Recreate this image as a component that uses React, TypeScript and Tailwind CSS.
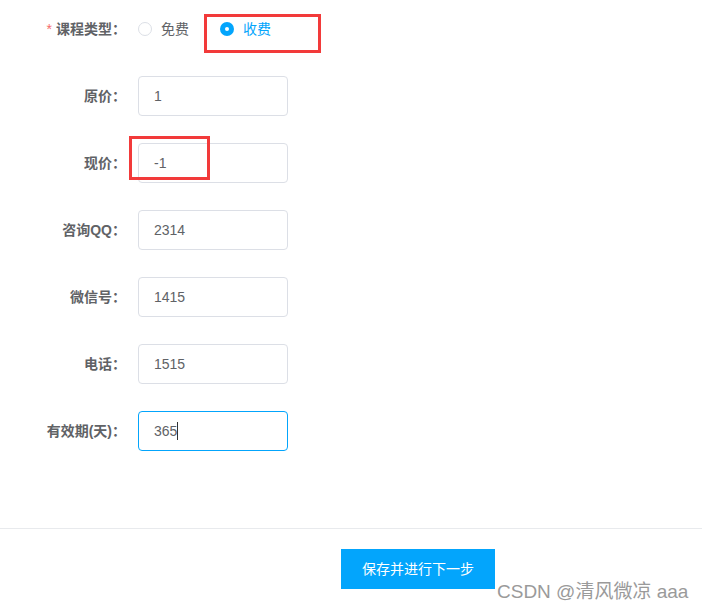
import React from "react"

const fields = [
    { label: "原价", value: "1" },
    { label: "现价", value: "-1" },
    { label: "咨询QQ", value: "2314" },
    { label: "微信号", value: "1415" },
    { label: "电话", value: "1515" },
]

function Radio({ checked, label }: { checked?: boolean; label: string }) {
    return (
        <label className="flex items-center gap-[9px] cursor-pointer">
            {checked ? (
                <span className="w-[14px] h-[14px] rounded-full bg-[#03a5fc] flex items-center justify-center">
                    <span className="w-[4px] h-[4px] rounded-full bg-white" />
                </span>
            ) : (
                <span className="w-[14px] h-[14px] rounded-full border border-[#dcdfe6] bg-white" />
            )}
            <span className={checked ? "text-[#03a5fc]" : "text-[#606266]"}>{label}</span>
        </label>
    )
}

function Row({ label, required, children }: { label: string; required?: boolean; children: React.ReactNode }) {
    return (
        <div className="flex items-center h-10">
            <div className="w-[138px] pr-3 text-right font-bold text-[#606266] text-sm">
                {required && <span className="text-[#f56c6c] mr-1 font-normal">*</span>}
                {label}：
            </div>
            {children}
        </div>
    )
}

export default function App() {
    return (
        <div
            className="relative w-[702px] h-[609px] bg-white overflow-hidden text-sm"
            style={{ fontFamily: '"Liberation Sans", "Noto Sans CJK SC", sans-serif' }}
        >
            <div className="flex flex-col gap-[27px] pt-[9px]">
                <Row label="课程类型" required>
                    <div className="flex items-center gap-[31px]">
                        <Radio label="免费" />
                        <Radio label="收费" checked />
                    </div>
                </Row>
                {fields.map((f) => (
                    <Row key={f.label} label={f.label}>
                        <div className="w-[150px] h-10 border border-[#dcdfe6] rounded px-[15px] flex items-center text-[#606266]">
                            {f.value}
                        </div>
                    </Row>
                ))}
                <Row label="有效期(天)">
                    <div className="w-[150px] h-10 border border-[#03a5fc] rounded px-[15px] flex items-center text-[#606266]">
                        365
                        <span className="w-px h-[18px] bg-[#333]" />
                    </div>
                </Row>
            </div>

            <div className="mt-[77px] border-t border-[#e8eaed]" />
            <div className="pt-5 pl-[341px]">
                <button className="w-[154px] h-10 bg-[#03a5fc] text-white text-sm">保存并进行下一步</button>
            </div>

            {/* annotations */}
            <div className="absolute left-[204px] top-[14px] w-[117px] h-[39px] border-[3px] border-[#f23a3a]" />
            <div className="absolute left-[129px] top-[136px] w-[81px] h-[44px] border-[3px] border-[#f23a3a]" />
            <div className="absolute left-[497px] top-[578px] text-[19px] text-[#9a9a9a]">CSDN @清风微凉 aaa</div>
        </div>
    )
}
